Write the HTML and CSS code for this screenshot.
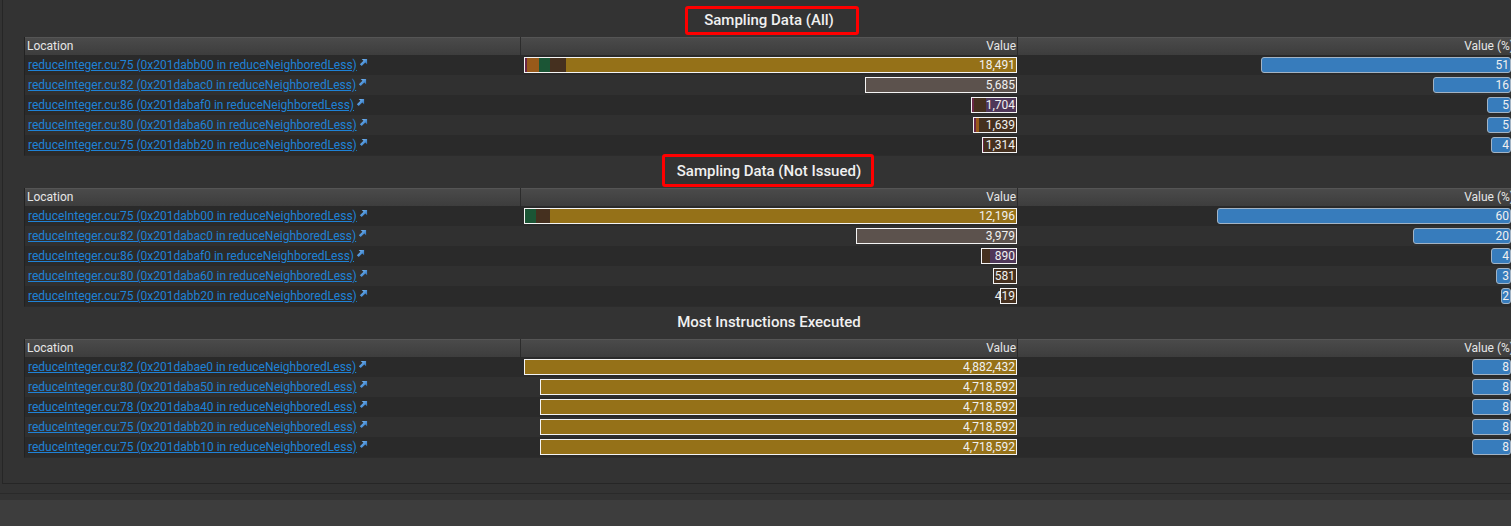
FILE: index.html
```html
<!DOCTYPE html>
<html>
<head>
<meta charset="utf-8">
<link rel="stylesheet" href="styles.css">
</head>
<body>
<svg width="0" height="0" class="defs">
  <defs>
    <linearGradient id="lg" x1="0" y1="0" x2="1" y2="1">
      <stop offset="0" stop-color="#8cc8ff"/>
      <stop offset="1" stop-color="#1a64b4"/>
    </linearGradient>
    <symbol id="ext" viewBox="0 0 10 10">
      <path d="M3 1 H9 V7 L7 5 L3 9 L1 7 L5 3 Z" fill="url(#lg)"/>
    </symbol>
  </defs>
</svg>
<div class="panel">

  <section class="sec sec-first">
    <div class="title"><span class="ttext">Sampling Data (All)<i class="mark mark-a"></i></span></div>
    <div class="table">
      <div class="row thead"><div class="th">Location</div><div class="th right">Value</div><div class="th right">Value (%)</div></div>
      <div class="row">
        <div class="loc"><a href="#">reduceInteger.cu:75 (0x201dabb00 in reduceNeighboredLess)</a><svg class="ext"><use href="#ext"/></svg></div>
        <div class="val"><div class="bar" style="width:493px"><i class="seg s-pur" style="width:2px"></i><i class="seg s-org" style="width:12px"></i><i class="seg s-grn" style="width:11px"></i><i class="seg s-brn" style="width:16px"></i><i class="seg s-gold fill"></i><span class="num">18,491</span></div></div>
        <div class="pct"><div class="pbar" style="width:250px"><span class="num">51</span></div></div>
      </div>
      <div class="row">
        <div class="loc"><a href="#">reduceInteger.cu:82 (0x201dabac0 in reduceNeighboredLess)</a><svg class="ext"><use href="#ext"/></svg></div>
        <div class="val"><div class="bar" style="width:152px"><i class="seg s-gry fill"></i><span class="num">5,685</span></div></div>
        <div class="pct"><div class="pbar" style="width:78px"><span class="num">16</span></div></div>
      </div>
      <div class="row">
        <div class="loc"><a href="#">reduceInteger.cu:86 (0x201dabaf0 in reduceNeighboredLess)</a><svg class="ext"><use href="#ext"/></svg></div>
        <div class="val"><div class="bar" style="width:46px"><i class="seg s-pur" style="width:2px"></i><i class="seg s-brn" style="width:12px"></i><i class="seg s-vio fill"></i><span class="num">1,704</span></div></div>
        <div class="pct"><div class="pbar" style="width:24px"><span class="num">5</span></div></div>
      </div>
      <div class="row">
        <div class="loc"><a href="#">reduceInteger.cu:80 (0x201daba60 in reduceNeighboredLess)</a><svg class="ext"><use href="#ext"/></svg></div>
        <div class="val"><div class="bar" style="width:44px"><i class="seg s-pur" style="width:2px"></i><i class="seg s-org" style="width:3px"></i><i class="seg s-brn fill"></i><span class="num">1,639</span></div></div>
        <div class="pct"><div class="pbar" style="width:24px"><span class="num">5</span></div></div>
      </div>
      <div class="row">
        <div class="loc"><a href="#">reduceInteger.cu:75 (0x201dabb20 in reduceNeighboredLess)</a><svg class="ext"><use href="#ext"/></svg></div>
        <div class="val"><div class="bar" style="width:35px"><i class="seg s-pur" style="width:1px"></i><i class="seg s-brn fill"></i><span class="num">1,314</span></div></div>
        <div class="pct"><div class="pbar" style="width:20px"><span class="num">4</span></div></div>
      </div>
    </div>
  </section>

  <section class="sec">
    <div class="title"><span class="ttext">Sampling Data (Not Issued)<i class="mark mark-b"></i></span></div>
    <div class="table">
      <div class="row thead"><div class="th">Location</div><div class="th right">Value</div><div class="th right">Value (%)</div></div>
      <div class="row">
        <div class="loc"><a href="#">reduceInteger.cu:75 (0x201dabb00 in reduceNeighboredLess)</a><svg class="ext"><use href="#ext"/></svg></div>
        <div class="val"><div class="bar" style="width:493px"><i class="seg s-grn" style="width:11px"></i><i class="seg s-brn" style="width:14px"></i><i class="seg s-gold fill"></i><span class="num">12,196</span></div></div>
        <div class="pct"><div class="pbar" style="width:294px"><span class="num">60</span></div></div>
      </div>
      <div class="row">
        <div class="loc"><a href="#">reduceInteger.cu:82 (0x201dabac0 in reduceNeighboredLess)</a><svg class="ext"><use href="#ext"/></svg></div>
        <div class="val"><div class="bar" style="width:161px"><i class="seg s-gry fill"></i><span class="num">3,979</span></div></div>
        <div class="pct"><div class="pbar" style="width:98px"><span class="num">20</span></div></div>
      </div>
      <div class="row">
        <div class="loc"><a href="#">reduceInteger.cu:86 (0x201dabaf0 in reduceNeighboredLess)</a><svg class="ext"><use href="#ext"/></svg></div>
        <div class="val"><div class="bar" style="width:36px"><i class="seg s-brn" style="width:8px"></i><i class="seg s-vio fill"></i><span class="num">890</span></div></div>
        <div class="pct"><div class="pbar" style="width:20px"><span class="num">4</span></div></div>
      </div>
      <div class="row">
        <div class="loc"><a href="#">reduceInteger.cu:80 (0x201daba60 in reduceNeighboredLess)</a><svg class="ext"><use href="#ext"/></svg></div>
        <div class="val"><div class="bar" style="width:24px"><i class="seg s-brn fill"></i><span class="num">581</span></div></div>
        <div class="pct"><div class="pbar" style="width:15px"><span class="num">3</span></div></div>
      </div>
      <div class="row">
        <div class="loc"><a href="#">reduceInteger.cu:75 (0x201dabb20 in reduceNeighboredLess)</a><svg class="ext"><use href="#ext"/></svg></div>
        <div class="val"><div class="bar" style="width:17px"><i class="seg s-brn fill"></i><span class="num">419</span></div></div>
        <div class="pct"><div class="pbar" style="width:10px"><span class="num">2</span></div></div>
      </div>
    </div>
  </section>

  <section class="sec">
    <div class="title"><span class="ttext">Most Instructions Executed</span></div>
    <div class="table">
      <div class="row thead"><div class="th">Location</div><div class="th right">Value</div><div class="th right">Value (%)</div></div>
      <div class="row">
        <div class="loc"><a href="#">reduceInteger.cu:82 (0x201dabae0 in reduceNeighboredLess)</a><svg class="ext"><use href="#ext"/></svg></div>
        <div class="val"><div class="bar" style="width:493px"><i class="seg s-gold fill"></i><span class="num">4,882,432</span></div></div>
        <div class="pct"><div class="pbar" style="width:39px"><span class="num">8</span></div></div>
      </div>
      <div class="row">
        <div class="loc"><a href="#">reduceInteger.cu:80 (0x201daba50 in reduceNeighboredLess)</a><svg class="ext"><use href="#ext"/></svg></div>
        <div class="val"><div class="bar" style="width:477px"><i class="seg s-gold fill"></i><span class="num">4,718,592</span></div></div>
        <div class="pct"><div class="pbar" style="width:39px"><span class="num">8</span></div></div>
      </div>
      <div class="row">
        <div class="loc"><a href="#">reduceInteger.cu:78 (0x201daba40 in reduceNeighboredLess)</a><svg class="ext"><use href="#ext"/></svg></div>
        <div class="val"><div class="bar" style="width:477px"><i class="seg s-gold fill"></i><span class="num">4,718,592</span></div></div>
        <div class="pct"><div class="pbar" style="width:39px"><span class="num">8</span></div></div>
      </div>
      <div class="row">
        <div class="loc"><a href="#">reduceInteger.cu:75 (0x201dabb20 in reduceNeighboredLess)</a><svg class="ext"><use href="#ext"/></svg></div>
        <div class="val"><div class="bar" style="width:477px"><i class="seg s-gold fill"></i><span class="num">4,718,592</span></div></div>
        <div class="pct"><div class="pbar" style="width:39px"><span class="num">8</span></div></div>
      </div>
      <div class="row">
        <div class="loc"><a href="#">reduceInteger.cu:75 (0x201dabb10 in reduceNeighboredLess)</a><svg class="ext"><use href="#ext"/></svg></div>
        <div class="val"><div class="bar" style="width:477px"><i class="seg s-gold fill"></i><span class="num">4,718,592</span></div></div>
        <div class="pct"><div class="pbar" style="width:39px"><span class="num">8</span></div></div>
      </div>
    </div>
  </section>

</div>
<div class="footer"><div class="footer-strip"></div><div class="footer-bar"></div></div>
</body>
</html>
```

FILE: styles.css
```css
html, body {
  margin: 0;
  padding: 0;
  background: #333333;
  overflow: hidden;
  width: 1511px;
  height: 526px;
}
body {
  font-family: Roboto, "Liberation Sans", sans-serif;
  font-size: 12px;
  color: #e4e4e4;
}
.defs { position: absolute; }

.panel {
  margin-left: 2px;
  box-sizing: border-box;
  border-left: 1px solid #262626;
  border-bottom: 1px solid #262626;
  padding-left: 21px;
  height: 484px;
}
.sec-first { padding-top: 5px; }

.title {
  height: 32px;
  box-sizing: border-box;
  padding-bottom: 2px;
  width: 1490px;
  display: flex;
  justify-content: center;
  align-items: center;
}
.ttext {
  position: relative;
  font-size: 15px;
  font-weight: 500;
  color: #f0f0f0;
  line-height: 32px;
}
.mark {
  position: absolute;
  border: 3px solid #ff0000;
  border-radius: 3px;
  box-sizing: border-box;
}
.mark-a { left: -19px; right: -25px; top: 2px; bottom: 1px; }
.mark-b { left: -15px; right: -13px; top: -1px; bottom: 0; }

.table {
  width: 1490px;
  border-left: 1px solid #222;
  border-bottom: 1px solid #2c2c2c;
}
.row {
  display: grid;
  grid-template-columns: 496px 497px 496px;
  height: 20px;
  background: #2a2a2a;
}
.row:nth-child(odd) { background: #303030; }
.row.thead {
  height: 18px;
  background: linear-gradient(#4b4b4b, #3d3d3d);
  box-shadow: inset 0 1px 0 #555;
}
.th {
  line-height: 18px;
  padding: 0 2px;
  color: #e6e6e6;
  border-right: 1px solid #2c2c2c;
  white-space: nowrap;
}
.th.right { text-align: right; padding-right: 1px; }
.th:last-child { border-right: none; padding-right: 0; }

.loc {
  display: flex;
  align-items: center;
  padding-left: 3px;
  white-space: nowrap;
}
.loc a {
  color: #1f82d6;
  text-decoration: underline;
  line-height: 20px;
}
.ext {
  width: 9px;
  height: 9px;
  margin-left: 2px;
  margin-top: -5px;
}

.val, .pct {
  display: flex;
  justify-content: flex-end;
  align-items: center;
}
.val { padding-right: 1px; }
.pct { padding-right: 3px; }

.bar {
  position: relative;
  height: 16px;
  box-sizing: border-box;
  border: 1px solid #f4f4f4;
  display: flex;
}
.seg { display: block; height: 100%; }
.fill { flex: 1; }
.s-gold { background: #957118; }
.s-pur { background: #6b2746; }
.s-org { background: #985a1a; }
.s-grn { background: #1b5535; }
.s-brn { background: #45301f; }
.s-gry { background: #5c524d; }
.s-vio { background: #4f3759; }

.num {
  position: absolute;
  right: 1px;
  top: 0;
  line-height: 14px;
  color: #f0f0f0;
  white-space: nowrap;
}

.pbar {
  position: relative;
  height: 16px;
  box-sizing: border-box;
  border: 1px solid #a2b3c4;
  border-radius: 3px;
  background: #377cbc;
}

.footer {
  height: 42px;
}
.footer-strip {
  height: 9px;
  border-bottom: 1px solid #2a2a2a;
}
.footer-bar {
  margin-top: 6px;
  height: 26px;
  background: #3d3d3d;
}
```
